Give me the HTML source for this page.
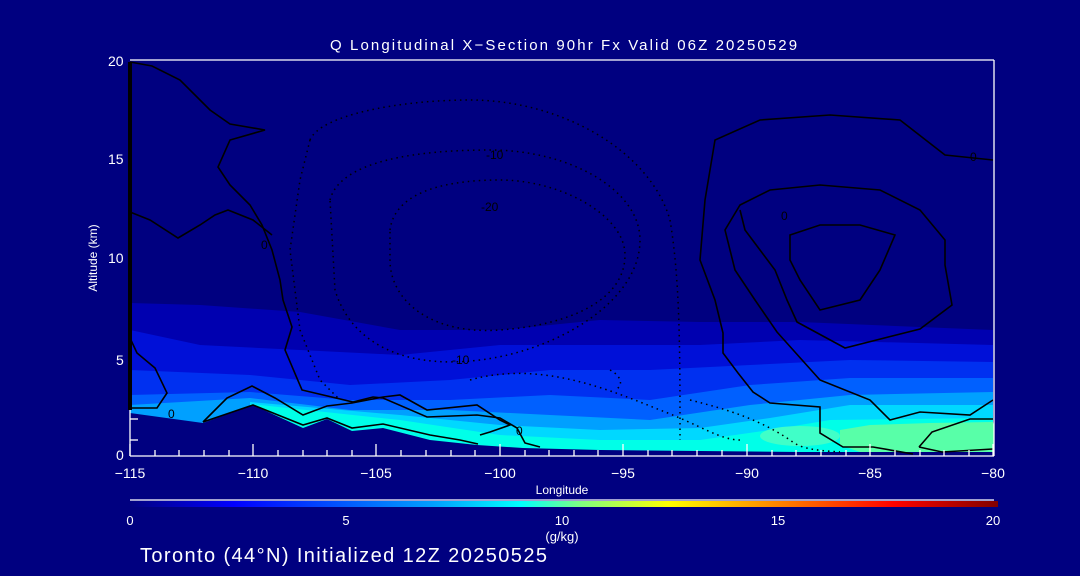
<!DOCTYPE html>
<html><head><meta charset="utf-8"><style>
html,body{margin:0;padding:0;background:#000080;width:1080px;height:576px;overflow:hidden}
svg{display:block}
text{font-family:"Liberation Sans",sans-serif;fill:#fff}
</style></head><body>
<svg width="1080" height="576" viewBox="0 0 1080 576" xmlns="http://www.w3.org/2000/svg">
<defs>
<linearGradient id="cb" x1="0" x2="1" y1="0" y2="0">
<stop offset="0" stop-color="#000080"/>
<stop offset="0.12" stop-color="#0000ff"/>
<stop offset="0.35" stop-color="#00a0ff"/>
<stop offset="0.45" stop-color="#00ffff"/>
<stop offset="0.52" stop-color="#80ff80"/>
<stop offset="0.62" stop-color="#ffff00"/>
<stop offset="0.75" stop-color="#ff8000"/>
<stop offset="0.88" stop-color="#ff0000"/>
<stop offset="1" stop-color="#800000"/>
</linearGradient>
<clipPath id="pl"><rect x="130" y="60" width="864" height="396"/></clipPath>
</defs>
<rect width="1080" height="576" fill="#000080"/>
<g clip-path="url(#pl)">
<polygon fill="#0000b0" points="130,303 200,305 300,312 400,330 500,330 600,320 700,322 800,322 993,330 993,455 130,455"/>
<polygon fill="#0010d8" points="130,330 200,345 300,350 400,355 500,345 600,345 700,345 800,340 993,345 993,455 130,455"/>
<polygon fill="#0030f0" points="130,370 250,375 350,385 450,380 550,370 650,370 750,365 850,360 993,362 993,455 130,455"/>
<polygon fill="#0060ff" points="130,395 250,392 350,400 450,400 550,395 650,400 750,385 850,378 993,378 993,455 130,455"/>
<polygon fill="#00a0ff" points="130,405 250,398 350,410 450,410 550,415 650,420 750,405 850,395 993,392 993,455 130,455"/>
<polygon fill="#00d8ff" points="250,402 400,415 500,425 600,430 700,428 770,418 850,405 993,405 993,455 250,455"/>
<polygon fill="#00ffe8" points="250,404 400,420 500,435 600,440 700,440 770,430 830,420 993,418 993,455 250,455"/>
<ellipse cx="800" cy="436" rx="40" ry="10" fill="#40ffc8"/>
<polygon fill="#58ffa8" points="840,430 870,425 930,423 993,422 1000,452 860,452 840,445"/>
</g>
<polygon fill="#000080" points="130,413 203,423 253,405 303,428 327,419 352,431 383,428 430,440 477,445 523,448 600,450 800,452 993,452 993,456 130,456"/>
<g fill="none" stroke="#000" stroke-width="1.6">
<polyline points="130,62 152,66 180,80 210,110 230,124 265,130 230,140 218,167 230,185 250,205 262,225 272,250 280,280 283,300 292,327 285,350 302,390 353,402 373,397 383,398 427,417 477,415 500,418 517,428 525,443 540,447"/>
<polyline points="130,212 150,220 178,238 200,225 215,215 228,210 253,220 272,235"/>
<polyline points="130,338 137,353 155,368 167,393 157,408 130,408"/>
<polyline points="203,422 227,398 252,386 275,398 303,415 327,406 352,403 383,397 400,395 427,410 477,405 500,420 510,425 490,432 480,435"/>
<polyline points="203,422 253,405 303,425 327,418 352,428 383,424 430,435 460,440 478,444"/>
<polyline points="993,160 945,155 900,120 830,115 760,120 715,140 705,200 700,260 715,300 723,333 723,353 738,373 753,392 770,403 820,407 820,433 843,447 873,447 913,454"/>
<polyline points="993,400 970,415 920,412 890,420 870,400 820,380 777,332 755,300 735,270 725,230 740,205 770,190 820,185 880,190 920,210 945,240 945,265 952,305 920,329 845,348 797,322 787,300 775,270 760,250 745,230 740,210"/>
<polygon points="790,235 820,225 860,225 895,235 880,270 860,300 820,310 800,280 790,260"/>
<polyline points="919,447 932,432 970,419 993,419"/>
<polyline points="919,447 942,452 993,449"/>
</g>
<rect x="128" y="62" width="4" height="348" fill="#000"/>
<g fill="none" stroke="#000" stroke-width="1.5" stroke-dasharray="1.5 4">
<path d="M310,140 C320,115 400,100 470,100 C560,100 650,150 670,220 C680,280 680,350 680,440"/>
<path d="M310,140 L300,180 L290,250 L300,330 L320,380 L340,400"/>
<path d="M330,200 C340,160 420,150 490,150 C570,150 640,190 640,240 C640,300 560,350 480,360 C400,370 350,340 335,290 Z"/>
<path d="M390,230 C395,190 450,180 500,180 C560,180 625,215 625,255 C625,300 570,325 500,330 C430,335 390,300 390,260 Z"/>
<path d="M470,380 C540,360 610,390 660,410 C700,425 720,440 740,440"/>
<path d="M690,400 C730,410 760,420 790,440 C800,448 810,450 840,452"/>
<path d="M610,370 C620,375 625,385 615,390"/>
</g>
<g font-size="12">
<text x="486" y="159" style="fill:#000">-10</text>
<text x="481" y="211" style="fill:#000">-20</text>
<text x="452" y="364" style="fill:#000">-10</text>
<text x="261" y="249" style="fill:#000">0</text>
<text x="781" y="220" style="fill:#000">0</text>
<text x="970" y="161" style="fill:#000">0</text>
<text x="168" y="418" style="fill:#000">0</text>
<text x="516" y="435" style="fill:#000">0</text>
</g>
<g stroke="#fff" stroke-width="1.3" fill="none">
<line x1="130" y1="60" x2="994" y2="60"/>
<line x1="994" y1="60" x2="994" y2="456"/>
<line x1="130" y1="456" x2="994" y2="456"/>
<line x1="130" y1="410" x2="130" y2="456"/>
<line x1="130" y1="419" x2="138" y2="419"/>
<line x1="130" y1="440" x2="138" y2="440"/>
</g>
<g stroke="#fff" stroke-width="1.3">
<path d="M130,456v-12 M253,456v-12 M376,456v-12 M500,456v-12 M623,456v-12 M747,456v-12 M870,456v-12 M993,456v-12
M155,456v-6 M179,456v-6 M204,456v-6 M229,456v-6 M278,456v-6 M303,456v-6 M327,456v-6 M352,456v-6 M401,456v-6 M426,456v-6 M451,456v-6 M475,456v-6 M525,456v-6 M549,456v-6 M574,456v-6 M598,456v-6 M648,456v-6 M672,456v-6 M697,456v-6 M722,456v-6 M772,456v-6 M796,456v-6 M821,456v-6 M846,456v-6 M895,456v-6 M920,456v-6 M944,456v-6 M969,456v-6"/>
</g>
<g font-size="14">
<text x="108" y="66">20</text>
<text x="108" y="164">15</text>
<text x="108" y="263">10</text>
<text x="116" y="365">5</text>
<text x="116" y="460">0</text>
<g text-anchor="middle">
<text x="130" y="478">−115</text>
<text x="253" y="478">−110</text>
<text x="376" y="478">−105</text>
<text x="500" y="478">−100</text>
<text x="623" y="478">−95</text>
<text x="747" y="478">−90</text>
<text x="870" y="478">−85</text>
<text x="993" y="478">−80</text>
</g>
</g>
<text x="562" y="494" font-size="12" text-anchor="middle">Longitude</text>
<text x="0" y="0" font-size="12" text-anchor="middle" transform="translate(97,258) rotate(-90)">Altitude (km)</text>
<text x="330" y="50" font-size="15" letter-spacing="2.1">Q Longitudinal X−Section 90hr  Fx Valid 06Z 20250529</text>
<line x1="130" y1="500" x2="994" y2="500" stroke="#fff" stroke-width="1.3"/>
<rect x="130" y="501" width="868" height="6" fill="url(#cb)"/>
<g font-size="13" text-anchor="middle">
<text x="130" y="525">0</text>
<text x="346" y="525">5</text>
<text x="562" y="525">10</text>
<text x="778" y="525">15</text>
<text x="993" y="525">20</text>
<text x="562" y="541">(g/kg)</text>
</g>
<text x="140" y="562" font-size="20" letter-spacing="1.4">Toronto (44°N) Initialized 12Z 20250525</text>
</svg>
</body></html>
